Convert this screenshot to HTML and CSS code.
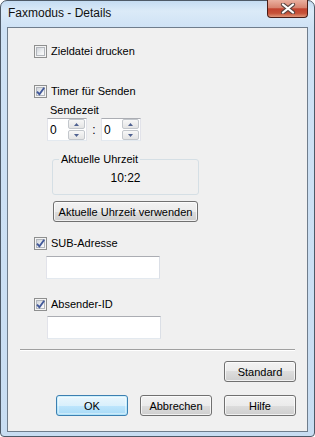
FILE: index.html
```html
<!DOCTYPE html>
<html lang="de">
<head>
    <meta charset="UTF-8">
    <meta name="viewport" content="width=device-width, initial-scale=1.0">
    <title>Faxmodus - Details</title>
    <link rel="stylesheet" href="styles.css">
</head>
<body>
    <div class="window">
        <div class="titlebar">
            <span class="title">Faxmodus - Details</span>
            <span class="close">
                <svg width="16" height="11" viewBox="0 0 16 11">
                    <path d="M3 1.5 L13 9.5 M13 1.5 L3 9.5" stroke="#5b4541" stroke-width="4.2" stroke-linecap="round"/>
                    <path d="M3 1.5 L13 9.5 M13 1.5 L3 9.5" stroke="#fff" stroke-width="2.2" stroke-linecap="round"/>
                </svg>
            </span>
        </div>
        <div class="client">
            <div class="opts">
                <label class="check">
                    <span class="cb"><span class="cb-in"></span></span>
                    Zieldatei drucken
                </label>

                <label class="check timer">
                    <span class="cb"><span class="cb-in"><svg width="9" height="9" viewBox="0 0 9 9"><path d="M1 4.6 L3.4 7.2 L8.2 0.8" fill="none" stroke="#42599a" stroke-width="1.9"/></svg></span></span>
                    Timer für Senden
                </label>
                <div class="sendezeit">Sendezeit</div>
                <div class="spins">
                    <div class="spin">
                        <span class="val">0</span>
                        <span class="arrows">
                            <span class="arr"><svg width="5" height="3" viewBox="0 0 5 3"><path d="M0 3 L2.5 0 L5 3 Z" fill="#4f6190"/></svg></span>
                            <span class="arr"><svg width="5" height="3" viewBox="0 0 5 3"><path d="M0 0 L2.5 3 L5 0 Z" fill="#4f6190"/></svg></span>
                        </span>
                    </div>
                    <span class="colon">:</span>
                    <div class="spin">
                        <span class="val">0</span>
                        <span class="arrows">
                            <span class="arr"><svg width="5" height="3" viewBox="0 0 5 3"><path d="M0 3 L2.5 0 L5 3 Z" fill="#4f6190"/></svg></span>
                            <span class="arr"><svg width="5" height="3" viewBox="0 0 5 3"><path d="M0 0 L2.5 3 L5 0 Z" fill="#4f6190"/></svg></span>
                        </span>
                    </div>
                </div>
                <fieldset class="group">
                    <legend>Aktuelle Uhrzeit</legend>
                    <div class="time">10:22</div>
                </fieldset>
                <button class="btn wide">Aktuelle Uhrzeit verwenden</button>

                <label class="check sub">
                    <span class="cb"><span class="cb-in"><svg width="9" height="9" viewBox="0 0 9 9"><path d="M1 4.6 L3.4 7.2 L8.2 0.8" fill="none" stroke="#42599a" stroke-width="1.9"/></svg></span></span>
                    SUB-Adresse
                </label>
                <div class="field f-sub"></div>

                <label class="check absender">
                    <span class="cb"><span class="cb-in"><svg width="9" height="9" viewBox="0 0 9 9"><path d="M1 4.6 L3.4 7.2 L8.2 0.8" fill="none" stroke="#42599a" stroke-width="1.9"/></svg></span></span>
                    Absender-ID
                </label>
                <div class="field f-abs"></div>
            </div>

            <div class="sep"></div>

            <div class="actions first">
                <button class="btn">Standard</button>
            </div>
            <div class="actions last">
                <button class="btn default">OK</button>
                <button class="btn">Abbrechen</button>
                <button class="btn">Hilfe</button>
            </div>
        </div>
    </div>
</body>
</html>
```

FILE: styles.css
```css
* {
    box-sizing: border-box;
}
body {
    margin: 0;
    font-family: "Liberation Sans", Arial, sans-serif;
    font-size: 11px;
    color: #000;
    background: #fff;
}
.window {
    width: 315px;
    height: 437px;
    display: flex;
    flex-direction: column;
    padding: 0 6px 4px;
    border: 1px solid #4d5967;
    border-radius: 7px 7px 4px 4px;
    background: linear-gradient(180deg, #c4dbf2 0, #dbeaf8 10px, #cfe2f5 26px, #c8ddf2 100%);
}
.titlebar {
    height: 26px;
    flex-shrink: 0;
    display: flex;
    justify-content: space-between;
    align-items: flex-start;
}
.title {
    font-size: 12px;
    line-height: 15px;
    padding: 5px 0 0 1px;
    color: #111;
}
.close {
    width: 41px;
    height: 18px;
    margin-top: -1px;
    display: flex;
    align-items: center;
    justify-content: center;
    border: 1px solid #4a1d16;
    border-top: none;
    border-radius: 0 0 4px 4px;
    background: linear-gradient(180deg, #eab0a0 0%, #d88470 45%, #c2432f 52%, #c65238 78%, #e0977a 100%);
}
.client {
    flex: 1;
    border: 1px solid #6f7d8c;
    background: #f0f0f0;
    padding-top: 17px;
}
.opts {
    margin-left: 26px;
}
.check {
    display: flex;
    align-items: center;
    height: 13px;
    line-height: 13px;
}
.cb {
    width: 13px;
    height: 13px;
    margin-right: 4px;
    padding: 1px;
    border: 1px solid #8e8f8f;
    background: #f4f4f4;
    flex-shrink: 0;
}
.cb-in {
    display: flex;
    align-items: center;
    justify-content: center;
    width: 9px;
    height: 9px;
    border: 1px solid #b2b6bc;
    background: linear-gradient(135deg, #d0d4da 0%, #eef0f2 60%, #fafafa 100%);
    overflow: visible;
}
.cb-in svg {
    flex-shrink: 0;
}
.timer {
    margin-top: 27px;
}
.sendezeit {
    margin: 6px 0 0 16px;
    line-height: 13px;
}
.spins {
    display: flex;
    align-items: center;
    height: 23px;
    margin: 1px 0 0 13px;
}
.spin {
    width: 40px;
    height: 23px;
    display: flex;
    align-items: center;
    padding: 0 1px 0 2px;
    border: 1px solid;
    border-color: #abadb3 #e2e3ea #e3e9ef #e2e3ea;
    background: #fff;
}
.val {
    flex: 1;
    font-size: 12px;
}
.arrows {
    width: 17px;
    height: 21px;
    display: flex;
    flex-direction: column;
    gap: 1px;
}
.arr {
    height: 10px;
    display: flex;
    align-items: center;
    justify-content: center;
    border: 1px solid #c3c7cc;
    border-radius: 2px;
    background: linear-gradient(180deg, #f7f7f7, #e4e4e4);
}
.colon {
    width: 14px;
    text-align: center;
    font-size: 12px;
}
.group {
    width: 147px;
    margin: 12px 0 0 18px;
    padding: 6px 0 9px;
    border: 1px solid #d5dfe5;
    border-radius: 3px;
    min-inline-size: 0;
}
.group legend {
    margin-left: 6px;
    padding: 0 2px;
    line-height: 13px;
}
.time {
    text-align: center;
    line-height: 13px;
    font-size: 12px;
}
.btn {
    width: 72px;
    height: 21px;
    padding: 0;
    font: inherit;
    color: #000;
    border: 1px solid #707070;
    border-radius: 3px;
    background: linear-gradient(180deg, #f2f2f2 0%, #ebebeb 50%, #dddddd 50%, #cfcfcf 100%);
    box-shadow: inset 0 0 0 1px rgba(255, 255, 255, 0.7);
}
.btn.default {
    border-color: #3c7fb1;
    background: linear-gradient(180deg, #eaf6fd 0%, #d9f0fc 50%, #bee6fd 50%, #a7d9f5 100%);
    box-shadow: inset 0 0 0 1px #48d0fa33, inset 0 0 0 2px rgba(255, 255, 255, 0.4);
}
.wide {
    display: block;
    width: 145px;
    margin: 6px 0 0 19px;
}
.sub {
    margin-top: 15px;
}
.field {
    width: 114px;
    height: 23px;
    border: 1px solid;
    border-color: #abadb3 #dbdfe6 #e3e9ef #e2e3ea;
    background: #fff;
}
.f-sub {
    margin: 6px 0 0 12px;
}
.absender {
    margin-top: 19px;
}
.f-abs {
    margin: 5px 0 0 13px;
}
.sep {
    height: 2px;
    margin: 10px 12px 0 12px;
    border-top: 1px solid #a0a0a0;
    border-bottom: 1px solid #fff;
}
.actions {
    display: flex;
    justify-content: flex-end;
    gap: 12px;
    padding-right: 11px;
}
.actions.first {
    margin-top: 10px;
}
.actions.last {
    margin-top: 13px;
}
```
